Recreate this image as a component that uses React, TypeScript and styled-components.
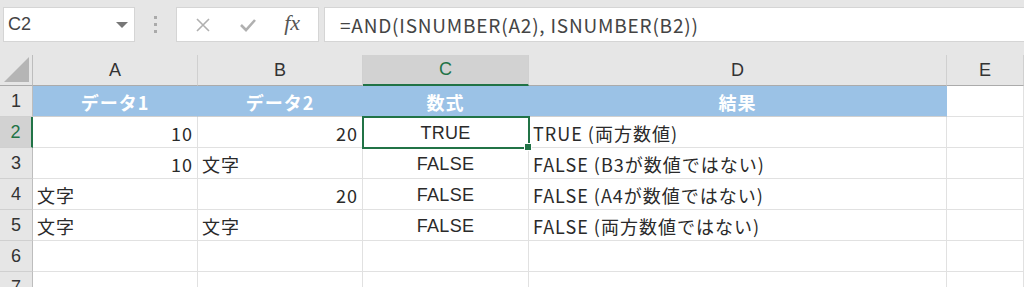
import styled, { createGlobalStyle, css } from "styled-components";

const GlobalStyle = createGlobalStyle`
  html, body {
    margin: 0;
    padding: 0;
    background: #e6e6e6;
    overflow: hidden;
  }
  * {
    box-sizing: border-box;
  }
`;

const GREEN = "#217346";
const CJK = `"Noto Sans CJK JP", "Noto Sans", sans-serif`;
const LATIN = `"Liberation Sans", Arial, sans-serif`;

const Page = styled.div`
  width: 1024px;
  height: 287px;
  background: #e6e6e6;
  overflow: hidden;
`;

const Toolbar = styled.div`
  height: 55px;
  display: flex;
  align-items: flex-start;
  padding: 7px 0 0 3px;
`;

const NameBox = styled.div`
  width: 132px;
  height: 35px;
  background: #fff;
  border: 1px solid #d5d5d5;
  display: flex;
  align-items: center;
  justify-content: space-between;
  padding: 0 6px 0 4px;
  font-family: ${LATIN};
  font-size: 18px;
  color: #444;
`;

const Caret = styled.span`
  width: 0;
  height: 0;
  border-left: 6px solid transparent;
  border-right: 6px solid transparent;
  border-top: 6px solid #777;
`;

const Dots = styled.div`
  width: 41px;
  height: 35px;
  display: flex;
  flex-direction: column;
  align-items: center;
  justify-content: center;
  gap: 4px;

  span {
    width: 3px;
    height: 3px;
    background: #aaa;
  }
`;

const FuncBox = styled.div`
  width: 143px;
  height: 35px;
  background: #fff;
  border: 1px solid #d5d5d5;
  display: flex;
  align-items: center;
  justify-content: space-around;
  padding: 0 4px;
`;

const Fx = styled.span`
  font-family: "Liberation Serif", "DejaVu Serif", serif;
  font-style: italic;
  font-size: 22px;
  color: #555;
  margin-top: -3px;
`;

const FormulaBox = styled.div`
  flex: 1;
  height: 35px;
  margin-left: 5px;
  background: #fff;
  border: 1px solid #d5d5d5;
  border-right: none;
  display: flex;
  align-items: center;
  padding-left: 15px;
  font-family: ${CJK};
  font-size: 19px;
  letter-spacing: 0.8px;
  color: #444;
  white-space: nowrap;
`;

const Grid = styled.div`
  display: grid;
  grid-template-columns: 33px 165px 165px 166px 418px 1fr;
  grid-auto-rows: 31px;
  background: #fff;
`;

const Corner = styled.div`
  background: #e6e6e6;
  border-right: 1px solid #bdbdbd;
  border-bottom: 1px solid #ababab;
  position: relative;

  &::after {
    content: "";
    position: absolute;
    right: 3px;
    bottom: 3px;
    width: 0;
    height: 0;
    border-left: 25px solid transparent;
    border-bottom: 25px solid #b5b5b5;
  }
`;

const ColHead = styled.div<{ $active?: boolean }>`
  background: #e6e6e6;
  border-right: 1px solid #d0d0d0;
  border-bottom: 1px solid #ababab;
  display: flex;
  align-items: center;
  justify-content: center;
  font-family: ${LATIN};
  font-size: 18px;
  color: #333;
  ${(p) =>
    p.$active &&
    css`
      background: #d2d2d2;
      color: ${GREEN};
      border-bottom: 2px solid ${GREEN};
    `}
`;

const RowHead = styled.div<{ $active?: boolean }>`
  background: #e6e6e6;
  border-right: 1px solid #bdbdbd;
  border-bottom: 1px solid #d0d0d0;
  display: flex;
  align-items: center;
  justify-content: center;
  font-family: ${LATIN};
  font-size: 18px;
  color: #333;
  ${(p) =>
    p.$active &&
    css`
      background: #d2d2d2;
      color: ${GREEN};
      border-right: 2px solid ${GREEN};
    `}
`;

const Cell = styled.div<{
  $align?: "left" | "right" | "center";
  $head?: boolean;
  $latin?: boolean;
  $selected?: boolean;
}>`
  position: relative;
  border-right: 1px solid #e1e1e1;
  border-bottom: 1px solid #e1e1e1;
  display: flex;
  align-items: center;
  padding: 2px 4px 0;
  justify-content: ${(p) =>
    p.$align === "right" ? "flex-end" : p.$align === "center" ? "center" : "flex-start"};
  font-family: ${(p) => (p.$latin ? LATIN : CJK)};
  font-size: 18px;
  line-height: 1;
  letter-spacing: ${(p) => (p.$latin ? "0.3px" : "1px")};
  color: #2a2a2a;
  white-space: nowrap;
  ${(p) =>
    p.$head &&
    css`
      background: #9bc2e6;
      color: #fff;
      font-weight: bold;
      border-right-color: #9bc2e6;
      border-bottom-color: #d0d0d0;
    `}
  ${(p) =>
    p.$selected &&
    css`
      outline: 2px solid ${GREEN};
      outline-offset: -1px;
      z-index: 1;
      &::after {
        content: "";
        position: absolute;
        right: -4px;
        bottom: -4px;
        width: 6px;
        height: 6px;
        background: ${GREEN};
        border: 1px solid #fff;
      }
    `}
`;

type Align = "left" | "right" | "center";
type C = { t?: string; a?: Align; latin?: boolean };

const cols = ["A", "B", "C", "D", "E"];

const rows: C[][] = [
  [
    { t: "データ1", a: "center" },
    { t: "データ2", a: "center" },
    { t: "数式", a: "center" },
    { t: "結果", a: "center" },
    {},
  ],
  [
    { t: "10", a: "right" },
    { t: "20", a: "right" },
    { t: "TRUE", a: "center", latin: true },
    { t: "TRUE (両方数値)" },
    {},
  ],
  [
    { t: "10", a: "right" },
    { t: "文字" },
    { t: "FALSE", a: "center", latin: true },
    { t: "FALSE (B3が数値ではない)" },
    {},
  ],
  [
    { t: "文字" },
    { t: "20", a: "right" },
    { t: "FALSE", a: "center", latin: true },
    { t: "FALSE (A4が数値ではない)" },
    {},
  ],
  [
    { t: "文字" },
    { t: "文字" },
    { t: "FALSE", a: "center", latin: true },
    { t: "FALSE (両方数値ではない)" },
    {},
  ],
  [{}, {}, {}, {}, {}],
  [{}, {}, {}, {}, {}],
];

export default function App() {
  return (
    <Page>
      <GlobalStyle />
      <Toolbar>
        <NameBox>
          C2
          <Caret />
        </NameBox>
        <Dots>
          <span />
          <span />
          <span />
        </Dots>
        <FuncBox>
          <svg width="16" height="16" viewBox="0 0 16 16">
            <path d="M2 2 L14 14 M14 2 L2 14" stroke="#b0b0b0" strokeWidth="1.6" fill="none" />
          </svg>
          <svg width="18" height="16" viewBox="0 0 18 16">
            <path d="M2 8 L7 13 L16 3" stroke="#b0b0b0" strokeWidth="2.6" fill="none" />
          </svg>
          <Fx>fx</Fx>
        </FuncBox>
        <FormulaBox>=AND(ISNUMBER(A2), ISNUMBER(B2))</FormulaBox>
      </Toolbar>
      <Grid>
        <Corner />
        {cols.map((c) => (
          <ColHead key={c} $active={c === "C"}>
            {c}
          </ColHead>
        ))}
        {rows.map((r, i) => (
          <>
            <RowHead key={`h${i}`} $active={i === 1}>
              {i + 1}
            </RowHead>
            {r.map((c, j) => (
              <Cell
                key={`${i}-${j}`}
                $align={c.a}
                $latin={c.latin}
                $head={i === 0 && j < 4}
                $selected={i === 1 && j === 2}
              >
                {c.t}
              </Cell>
            ))}
          </>
        ))}
      </Grid>
    </Page>
  );
}
